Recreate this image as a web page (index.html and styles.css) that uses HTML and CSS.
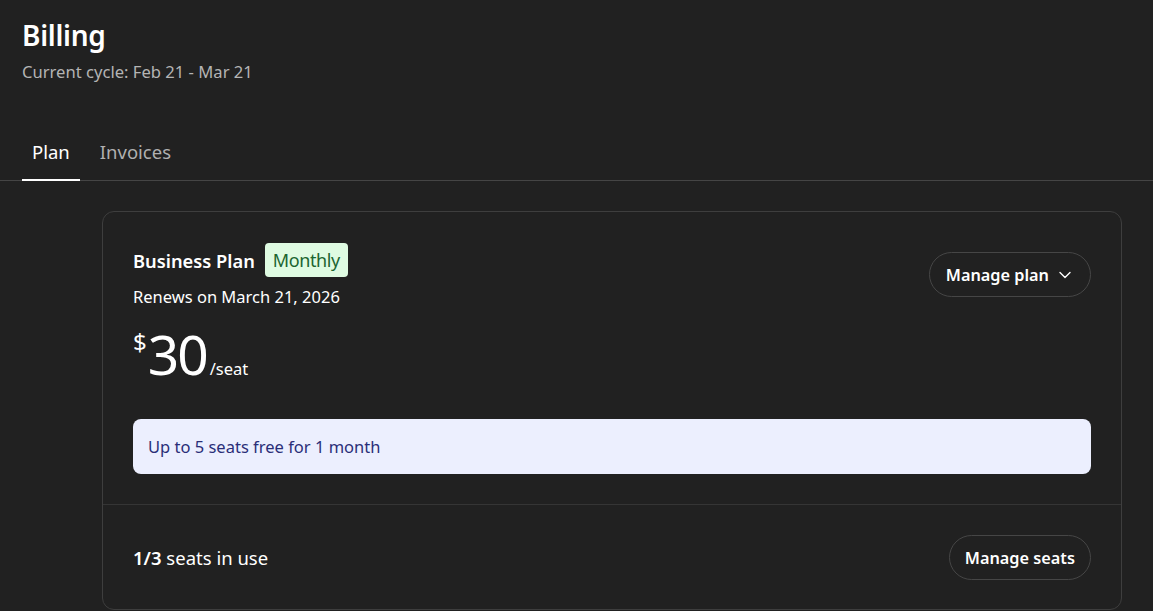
FILE: index.html
```html
<!DOCTYPE html>
<html>
<head>
<meta charset="utf-8">
<link rel="stylesheet" href="styles.css">
</head>
<body>
<header class="page-header">
  <h1 class="title">Billing</h1>
  <p class="subtitle">Current cycle: Feb 21 - Mar 21</p>
</header>
<nav class="tabs">
  <a class="tab active">Plan</a>
  <a class="tab">Invoices</a>
</nav>
<main class="content">
  <section class="card">
    <div class="card-top">
      <div class="plan-row">
        <div class="plan-info">
          <div class="plan-name-row">
            <span class="plan-name">Business Plan</span>
            <span class="badge">Monthly</span>
          </div>
          <div class="renews">Renews on March 21, 2026</div>
        </div>
        <button class="pill-btn manage-plan">Manage plan
          <svg class="chev" width="14" height="14" viewBox="0 0 14 14"><path d="M2 4.5 L7 9.5 L12 4.5" fill="none" stroke="#fff" stroke-width="1.4" stroke-linecap="round" stroke-linejoin="round"/></svg>
        </button>
      </div>
      <div class="price">
        <span class="currency">$</span><span class="amount">30</span><span class="per">/seat</span>
      </div>
      <div class="notice">Up to 5 seats free for 1 month</div>
    </div>
    <div class="card-bottom">
      <div class="seats"><b>1/3</b> seats in use</div>
      <button class="pill-btn manage-seats">Manage seats</button>
    </div>
  </section>
</main>
</body>
</html>
```
FILE: styles.css
```css
html, body {
  margin: 0;
  padding: 0;
  background: #212121;
  color: #fff;
  font-family: "Noto Sans", "Open Sans", sans-serif;
  height: 611px;
  overflow: hidden;
}
.page-header {
  padding: 15px 22px 0;
}
.title {
  margin: 0;
  font-size: 28px;
  font-weight: 600;
  line-height: 40px;
  letter-spacing: -0.3px;
}
.subtitle {
  margin: 6px 0 0;
  font-size: 16.6px;
  line-height: 22px;
  color: #b4b4b4;
}
.tabs {
  display: flex;
  gap: 10px;
  margin-top: 49px;
  padding-left: 22px;
  border-bottom: 1px solid #454545;
}
.tab {
  padding: 0 10px 7px;
  font-size: 18.5px;
  line-height: 40px;
  color: #b0b0b0;
  border-bottom: 2px solid transparent;
  margin-bottom: -1px;
}
.tab.active {
  color: #fff;
  border-bottom-color: #fff;
}
.content {
  padding: 30px 31px 0 102px;
}
.card {
  border: 1px solid #3e3e3e;
  border-radius: 12px;
  background: #212121;
}
.card-top {
  padding: 31px 30px 30px;
  border-bottom: 1px solid #353535;
}
.plan-row {
  display: flex;
  justify-content: space-between;
  align-items: flex-start;
}
.plan-name-row {
  display: flex;
  align-items: center;
  gap: 10px;
}
.plan-name {
  font-size: 18.3px;
  font-weight: 600;
}
.badge {
  background: #dffbe2;
  color: #1c6530;
  font-size: 18px;
  line-height: 34px;
  padding: 0 8px;
  border-radius: 4px;
  letter-spacing: -0.4px;
}
.renews {
  margin-top: 8px;
  font-size: 16.5px;
  line-height: 24px;
}
.pill-btn {
  background: transparent;
  color: #fff;
  border: 1px solid #464646;
  border-radius: 999px;
  height: 45px;
  padding: 0 16px;
  font-family: inherit;
  font-size: 16.3px;
  font-weight: 600;
  display: flex;
  align-items: center;
  gap: 9px;
}
.manage-plan {
  padding-right: 18px;
  margin-top: 9px;
}
.manage-seats {
  padding: 0 15px;
}
.price {
  margin-top: 15px;
  display: flex;
  align-items: baseline;
}
.currency {
  font-size: 24px;
  align-self: flex-start;
  line-height: 30px;
  margin-top: 3px;
  margin-right: 1px;
}
.amount {
  font-size: 55px;
  line-height: 60px;
  font-weight: 400;
  letter-spacing: -2px;
}
.per {
  font-size: 16.5px;
  margin-left: 3px;
}
.notice {
  margin-top: 35px;
  background: #eceffe;
  color: #2a2e78;
  border-radius: 8px;
  height: 55px;
  display: flex;
  align-items: center;
  padding: 0 15px;
  font-size: 16.5px;
}
.card-bottom {
  display: flex;
  justify-content: space-between;
  align-items: center;
  padding: 30px 30px 29px;
}
.seats {
  font-size: 18.5px;
}
.seats b {
  font-weight: 600;
}
```
